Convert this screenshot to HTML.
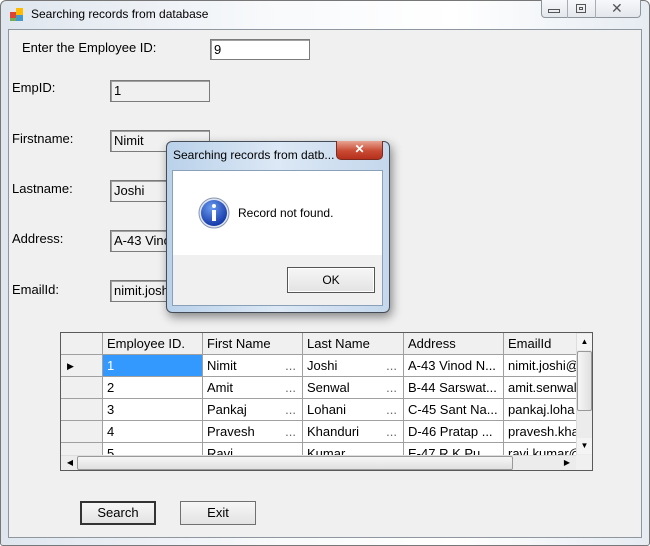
<!DOCTYPE html>
<html><head><meta charset="utf-8">
<style>
*{box-sizing:border-box;margin:0;padding:0}
body{width:650px;height:546px;overflow:hidden;background:#fff;font-family:"Liberation Sans",Arial,sans-serif;font-size:13px;color:#000;position:relative}
.abs{position:absolute}
#frame{left:0;top:0;width:650px;height:546px;background:linear-gradient(90deg,#dfe6ee,#f7f9fb 40%,#fff 70%,#e6ecf2);border:1px solid #777;border-radius:6px 6px 3px 3px}
#client{left:8px;top:29px;width:634px;height:509px;background:#f0f0f0;border:1px solid #8e96a0}
.lbl{position:absolute;font-size:13px}
.tb{position:absolute;background:#f0f0f0;border:1px solid #7b7b7b;box-shadow:inset 1px 1px 0 #a0a0a0;padding:2px 3px;font-size:13px;height:22px;width:100px;overflow:hidden;white-space:nowrap}
.btn{position:absolute;background:linear-gradient(#f6f6f6,#e3e3e3);border:1px solid #707070;text-align:center;font-size:13px;line-height:20px}
#grid{left:60px;top:332px;width:533px;height:139px;border:1px solid #5a5a5a;background:#fff;overflow:hidden}
.c{position:absolute;height:22px;line-height:22px;padding-left:4px;border-right:1px solid #a0a0a0;border-bottom:1px solid #a0a0a0;white-space:nowrap;overflow:hidden;font-size:13px;background:#fff}
.h{background:#f0f0f0}
.dots{position:absolute;right:6px;top:0;color:#666}
</style></head><body>
<div id="frame" class="abs"></div>
<svg class="abs" style="left:10px;top:8px" width="14" height="14" viewBox="0 0 14 14"><rect x="0" y="4" width="6" height="6" fill="#d43"/><rect x="6" y="0" width="7" height="7" fill="#fb0"/><rect x="6" y="7" width="7" height="6" fill="#49c"/><rect x="0" y="10" width="6" height="3" fill="#7a5"/></svg>
<div class="abs" style="left:31px;top:7px;font-size:12px">Searching records from database</div>
<div class="abs" style="left:541px;top:0;width:100px;height:18px;border:1px solid #8c949c;border-top:none;border-radius:0 0 4px 4px;background:linear-gradient(#f7f8fa,#e3e7ec)"></div>
<div class="abs" style="left:567px;top:0;width:1px;height:18px;background:#a6adb5"></div>
<div class="abs" style="left:595px;top:0;width:1px;height:18px;background:#a6adb5"></div>
<div class="abs" style="left:548px;top:9px;width:12px;height:4px;border:1px solid #555"></div>
<div class="abs" style="left:576px;top:4px;width:10px;height:9px;border:1px solid #555"><div style="margin:2px;width:4px;height:3px;border:1px solid #555"></div></div>
<div class="abs" style="left:611px;top:0px;font-size:14px;color:#555">✕</div>
<div id="client" class="abs"></div>

<div class="lbl" style="left:22px;top:40px">Enter the Employee ID:</div>
<div class="tb" style="left:210px;top:39px;background:#fff;height:21px">9</div>
<div class="lbl" style="left:12px;top:80px">EmpID:</div>
<div class="tb" style="left:110px;top:80px">1</div>
<div class="lbl" style="left:12px;top:131px">Firstname:</div>
<div class="tb" style="left:110px;top:130px">Nimit</div>
<div class="lbl" style="left:12px;top:181px">Lastname:</div>
<div class="tb" style="left:110px;top:180px">Joshi</div>
<div class="lbl" style="left:12px;top:231px">Address:</div>
<div class="tb" style="left:110px;top:230px">A-43 Vinod Nagar</div>
<div class="lbl" style="left:12px;top:282px">EmailId:</div>
<div class="tb" style="left:110px;top:280px">nimit.joshi@gmail.com</div>

<div id="grid" class="abs">
<div class="c h" style="left:0;top:0;width:42px"></div>
<div class="c h" style="left:42px;top:0;width:100px">Employee ID.</div>
<div class="c h" style="left:142px;top:0;width:100px">First Name</div>
<div class="c h" style="left:242px;top:0;width:101px">Last Name</div>
<div class="c h" style="left:343px;top:0;width:100px">Address</div>
<div class="c h" style="left:443px;top:0;width:80px">EmailId</div>

<div class="c h" style="left:0;top:22px;width:42px;padding-left:6px;font-size:9px">▶</div>
<div class="c" style="left:42px;top:22px;width:100px;background:#3399ff;color:#fff">1</div>
<div class="c" style="left:142px;top:22px;width:100px">Nimit<span class="dots">...</span></div>
<div class="c" style="left:242px;top:22px;width:101px">Joshi<span class="dots">...</span></div>
<div class="c" style="left:343px;top:22px;width:100px">A-43 Vinod N...</div>
<div class="c" style="left:443px;top:22px;width:80px">nimit.joshi@</div>

<div class="c h" style="left:0;top:44px;width:42px"></div>
<div class="c" style="left:42px;top:44px;width:100px">2</div>
<div class="c" style="left:142px;top:44px;width:100px">Amit<span class="dots">...</span></div>
<div class="c" style="left:242px;top:44px;width:101px">Senwal<span class="dots">...</span></div>
<div class="c" style="left:343px;top:44px;width:100px">B-44 Sarswat...</div>
<div class="c" style="left:443px;top:44px;width:80px">amit.senwal</div>

<div class="c h" style="left:0;top:66px;width:42px"></div>
<div class="c" style="left:42px;top:66px;width:100px">3</div>
<div class="c" style="left:142px;top:66px;width:100px">Pankaj<span class="dots">...</span></div>
<div class="c" style="left:242px;top:66px;width:101px">Lohani<span class="dots">...</span></div>
<div class="c" style="left:343px;top:66px;width:100px">C-45 Sant Na...</div>
<div class="c" style="left:443px;top:66px;width:80px">pankaj.loha</div>

<div class="c h" style="left:0;top:88px;width:42px"></div>
<div class="c" style="left:42px;top:88px;width:100px">4</div>
<div class="c" style="left:142px;top:88px;width:100px">Pravesh<span class="dots">...</span></div>
<div class="c" style="left:242px;top:88px;width:101px">Khanduri<span class="dots">...</span></div>
<div class="c" style="left:343px;top:88px;width:100px">D-46 Pratap ...</div>
<div class="c" style="left:443px;top:88px;width:80px">pravesh.kha</div>

<div class="c h" style="left:0;top:110px;width:42px"></div>
<div class="c" style="left:42px;top:110px;width:100px">5</div>
<div class="c" style="left:142px;top:110px;width:100px">Ravi</div>
<div class="c" style="left:242px;top:110px;width:101px">Kumar</div>
<div class="c" style="left:343px;top:110px;width:100px">E-47 R K Pu...</div>
<div class="c" style="left:443px;top:110px;width:80px">ravi.kumar@</div>

<!-- vscroll -->
<div class="abs" style="left:515px;top:0;width:17px;height:122px;background:#ececec;border-left:1px solid #ddd"></div>
<div class="abs" style="left:516px;top:1px;width:15px;height:16px;background:#f4f4f4;font-size:8px;text-align:center;line-height:16px">▲</div>
<div class="abs" style="left:516px;top:18px;width:15px;height:60px;background:linear-gradient(90deg,#f6f6f6,#e0e0e0);border:1px solid #999;border-radius:2px"></div>
<div class="abs" style="left:516px;top:105px;width:15px;height:16px;background:#f4f4f4;font-size:8px;text-align:center;line-height:16px">▼</div>
<!-- hscroll -->
<div class="abs" style="left:0;top:122px;width:515px;height:16px;background:#ececec;border-top:1px solid #ddd"></div>
<div class="abs" style="left:2px;top:123px;width:14px;height:14px;font-size:8px;line-height:14px;text-align:center">◀</div>
<div class="abs" style="left:16px;top:123px;width:436px;height:14px;background:linear-gradient(#f6f6f6,#e0e0e0);border:1px solid #999;border-radius:2px"></div>
<div class="abs" style="left:499px;top:123px;width:14px;height:14px;font-size:8px;line-height:14px;text-align:center">▶</div>
<div class="abs" style="left:515px;top:122px;width:17px;height:16px;background:#f0f0f0"></div>
</div>

<div class="btn" style="left:80px;top:501px;width:76px;height:24px;border:2px solid #333;line-height:20px">Search</div>
<div class="btn" style="left:180px;top:501px;width:76px;height:24px;line-height:22px">Exit</div>

<!-- dialog -->
<div class="abs" style="left:166px;top:141px;width:224px;height:172px;border:1px solid #444c57;border-radius:6px;background:linear-gradient(90deg,#b9d1ea,#dce8f5 50%,#c4d7ec);box-shadow:2px 4px 10px rgba(0,0,0,.45)"></div>
<div class="abs" style="left:173px;top:148px;font-size:12px;color:#000">Searching records from datb...</div>
<div class="abs" style="left:336px;top:141px;width:47px;height:19px;border:1px solid #7b2a20;border-top:none;border-radius:0 0 5px 5px;background:linear-gradient(#e8a493,#c94a34 55%,#b5301c);color:#fff;text-align:center;font-weight:bold;font-size:12px;line-height:17px">✕</div>
<div class="abs" style="left:172px;top:170px;width:211px;height:136px;border:1px solid #8aa0b8;background:#f0f0f0"></div>
<div class="abs" style="left:173px;top:171px;width:209px;height:84px;background:#fff"></div>
<svg class="abs" style="left:198px;top:197px" width="32" height="32" viewBox="0 0 32 32"><defs><radialGradient id="g" cx="40%" cy="30%" r="70%"><stop offset="0" stop-color="#6a9bf0"/><stop offset="1" stop-color="#1538a8"/></radialGradient></defs><circle cx="16" cy="16" r="15" fill="#dfe6f2" stroke="#8796b0"/><circle cx="16" cy="16" r="13" fill="url(#g)"/><circle cx="16" cy="9" r="2" fill="#fff"/><rect x="14" y="13" width="4" height="11" fill="#fff"/></svg>
<div class="abs" style="left:238px;top:206px;font-size:12px">Record not found.</div>
<div class="btn" style="left:287px;top:267px;width:88px;height:26px;line-height:24px;border:1px solid #555;box-shadow:inset 0 0 0 1px #fff;font-size:12px">OK</div>
</body></html>
